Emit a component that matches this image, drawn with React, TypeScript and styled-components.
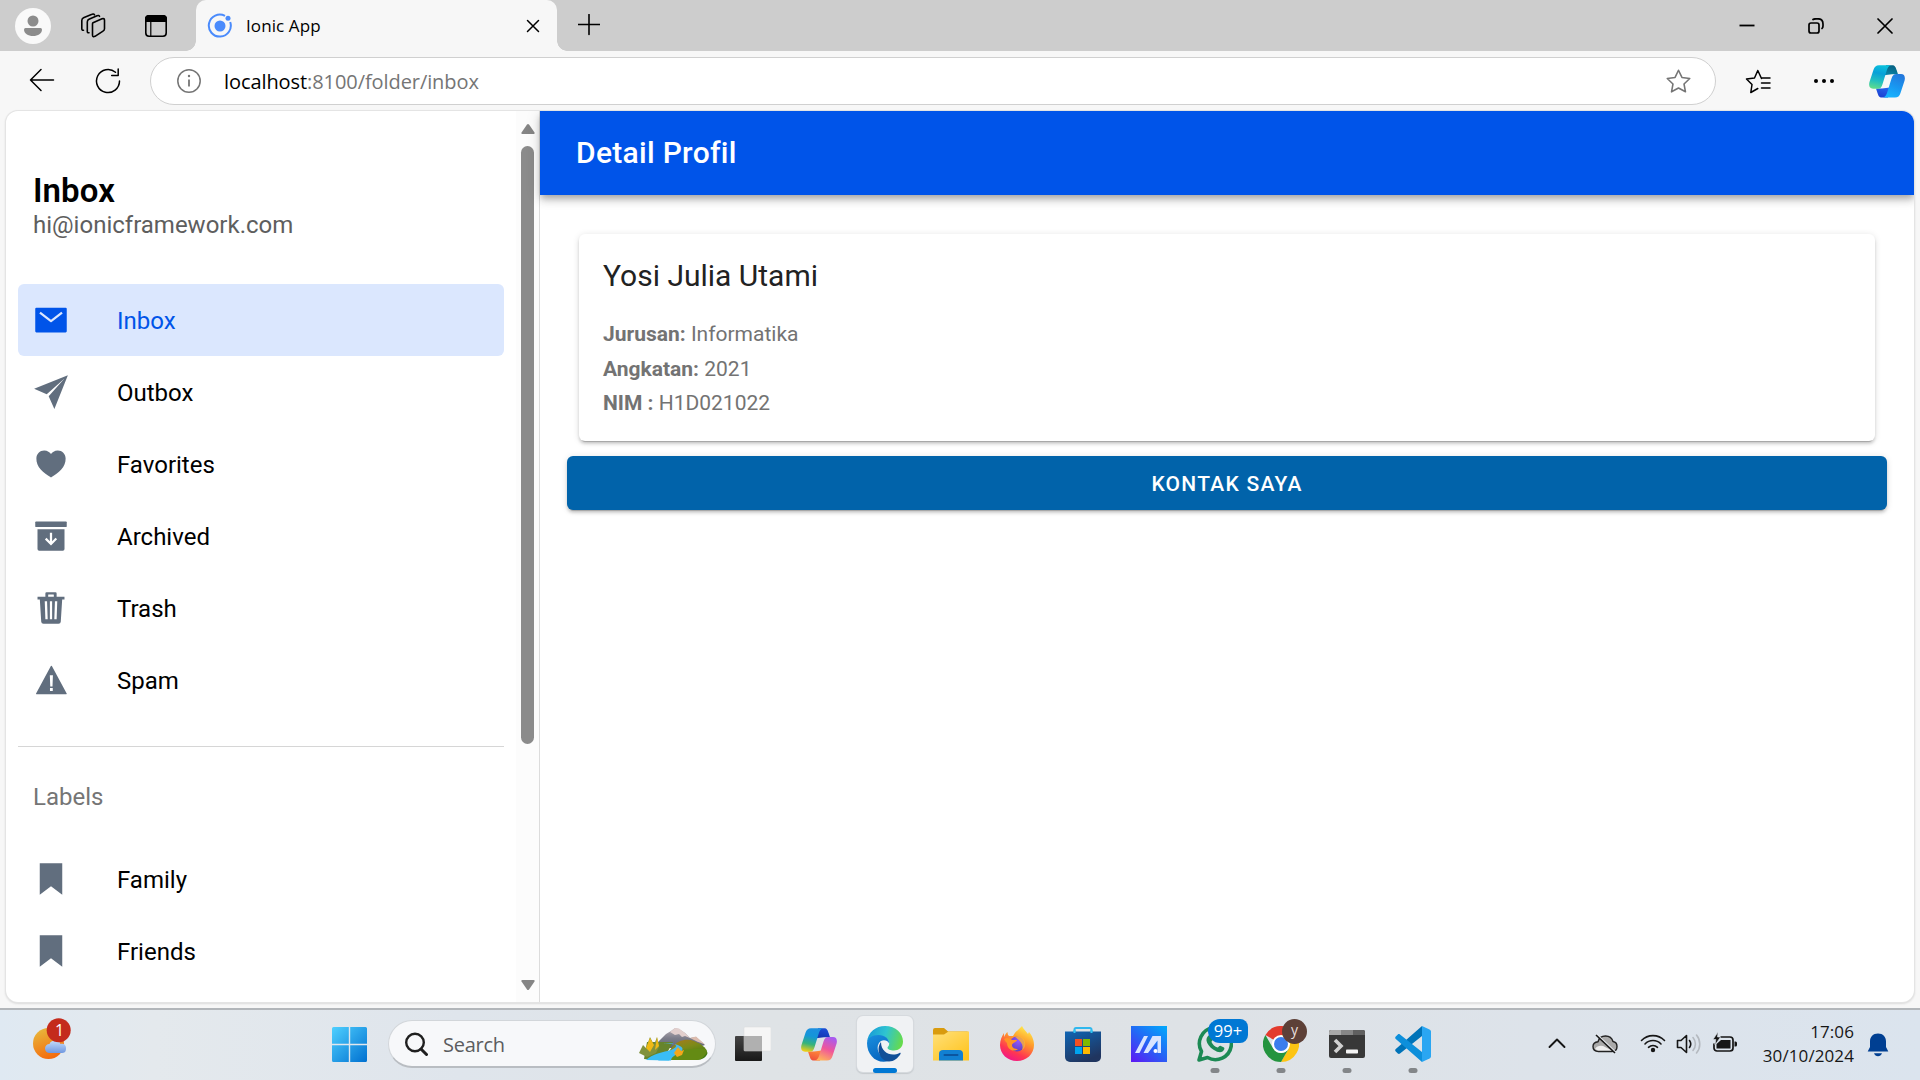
import React from "react";
import styled, { createGlobalStyle } from "styled-components";
import {
  IoMailSharp,
  IoPaperPlaneSharp,
  IoHeartSharp,
  IoArchiveSharp,
  IoTrashSharp,
  IoWarningSharp,
  IoBookmarkSharp,
} from "react-icons/io5";

const GlobalStyle = createGlobalStyle`
  * { box-sizing: border-box; }
  body { margin: 0; background: #f7f7f7; }
  h1, h2, p { margin: 0; font-weight: 400; }
  svg { display: block; flex: none; }
`;

const uiFont = `"Open Sans", "Noto Sans", sans-serif`;
const appFont = `Roboto, "Liberation Sans", sans-serif`;

const Screen = styled.div`
  width: 1920px;
  height: 1080px;
  display: flex;
  flex-direction: column;
  overflow: hidden;
  background: #f7f7f7;
  font-family: ${uiFont};
  color: #000;
`;

/* ---------- browser chrome ---------- */

const TabStrip = styled.div`
  display: flex;
  height: 51px;
  flex: none;
  background: #cdcdcd;
`;

const Slot = styled.div<{ $w: number; $up?: number }>`
  width: ${(p) => p.$w}px;
  flex: none;
  display: flex;
  align-items: center;
  justify-content: center;
  padding-bottom: ${(p) => p.$up ?? 0}px;
`;

const Tab = styled.div`
  position: relative;
  display: flex;
  align-items: center;
  width: 361px;
  background: #f7f7f7;
  border-radius: 10px 10px 0 0;
  &::before,
  &::after {
    content: "";
    position: absolute;
    bottom: 0;
    width: 10px;
    height: 10px;
  }
  &::before {
    left: -10px;
    background: radial-gradient(circle at 0 0, transparent 9.5px, #f7f7f7 10px);
  }
  &::after {
    right: -10px;
    background: radial-gradient(circle at 100% 0, transparent 9.5px, #f7f7f7 10px);
  }
`;

const TabTitle = styled.span`
  flex: 1;
  padding-left: 3px;
  font-size: 17px;
  line-height: 24px;
  letter-spacing: 0.1px;
`;

const Spacer = styled.div`
  flex: 1;
`;

const Toolbar = styled.div`
  display: flex;
  align-items: center;
  height: 60px;
  flex: none;
`;

const AddressBar = styled.div`
  display: flex;
  align-items: center;
  width: 1566px;
  height: 48px;
  flex: none;
  border: 1px solid #d0d0d0;
  border-radius: 24px;
  background: #fff;
`;

const Url = styled.span`
  flex: 1;
  padding: 2px 0 0 10px;
  font-size: 20px;
  line-height: 28px;
  letter-spacing: -0.08px;
  color: #757575;
  b {
    font-weight: 400;
    color: #000;
  }
`;

/* ---------- page ---------- */

const Page = styled.div`
  display: flex;
  height: 891px;
  flex: none;
  margin: 0 6px;
  overflow: hidden;
  background: #fff;
  border-radius: 12px;
  box-shadow: 0 0 0 1px #e4e4e4, 0 1px 2px 1px #dcdcdc;
  font-family: ${appFont};
`;

const Sidebar = styled.aside`
  display: flex;
  width: 534px;
  flex: none;
  border-right: 1px solid #dcdcdc;
`;

const MenuBody = styled.div`
  flex: 1;
  padding: 60px 12px 0;
`;

const MenuHeading = styled.h1`
  padding-left: 15px;
  font-size: 33px;
  line-height: 39px;
  font-weight: 600;
  letter-spacing: 0.1px;
`;

const MenuNote = styled.p`
  padding-left: 15px;
  margin-bottom: 44px;
  font-size: 24px;
  line-height: 30px;
  color: #5e5e5e;
`;

const MenuItem = styled.div<{ $active?: boolean }>`
  display: flex;
  align-items: center;
  height: 72px;
  padding: 0 15px;
  border-radius: 6px;
  font-size: 24px;
  line-height: 30px;
  color: ${(p) => (p.$active ? "#0054e9" : "#000")};
  background: ${(p) => (p.$active ? "#dbe7fe" : "transparent")};
  svg {
    width: 36px;
    height: 36px;
    margin-right: 48px;
    color: ${(p) => (p.$active ? "#0054e9" : "#616e7e")};
  }
  span {
    padding-top: 2px;
  }
`;

const Divider = styled.div`
  height: 1px;
  margin: 30px 0 35px;
  background: #d6d6d6;
`;

const ListHeader = styled.p`
  padding-left: 15px;
  margin-bottom: 31px;
  font-size: 24px;
  line-height: 30px;
  color: #757575;
`;

const ScrollTrack = styled.div`
  display: flex;
  flex-direction: column;
  align-items: center;
  width: 23px;
  padding: 12px 0 11px;
  background: #fcfcfc;
`;

const ScrollThumb = styled.div`
  width: 13px;
  height: 598px;
  margin: 11px 0 auto;
  border-radius: 7px;
  background: #8b8b8b;
`;

const Main = styled.main`
  flex: 1;
  display: flex;
  flex-direction: column;
`;

const MainHeader = styled.header`
  display: flex;
  align-items: center;
  height: 84px;
  flex: none;
  padding: 0 36px;
  background: #0054e9;
  color: #fff;
  font-size: 30px;
  line-height: 36px;
  font-weight: 480;
  letter-spacing: 0.3px;
  box-shadow: 0 3px 6px -1.5px rgba(0, 0, 0, 0.2), 0 6px 7.5px 0 rgba(0, 0, 0, 0.14),
    0 1.5px 15px 0 rgba(0, 0, 0, 0.12);
`;

const Content = styled.div`
  display: flex;
  flex-direction: column;
  padding: 39px 27px 0;
`;

const Card = styled.section`
  height: 207px;
  margin: 0 12px 15px;
  padding: 24px;
  border-radius: 6px;
  background: #fff;
  box-shadow: 0 4px 1px -3px rgba(0, 0, 0, 0.2), 0 3px 3px 0 rgba(0, 0, 0, 0.14),
    0 1px 7px 0 rgba(0, 0, 0, 0.12);
`;

const CardTitle = styled.h2`
  margin-bottom: 23px;
  font-size: 30px;
  line-height: 36px;
  color: #222;
`;

const CardLine = styled.p`
  font-size: 21px;
  line-height: 34.5px;
  color: #737373;
  b {
    font-weight: 700;
  }
`;

const ContactButton = styled.button`
  height: 54px;
  padding: 2px 0 0;
  border: 0;
  border-radius: 6px;
  background: #0163aa;
  color: #fff;
  font: 480 21px/30px ${appFont};
  letter-spacing: 1.26px;
  box-shadow: 0 4px 1px -3px rgba(0, 0, 0, 0.2), 0 3px 3px 0 rgba(0, 0, 0, 0.14),
    0 1px 7px 0 rgba(0, 0, 0, 0.12);
`;

/* ---------- taskbar ---------- */

const Taskbar = styled.footer`
  display: flex;
  align-items: stretch;
  height: 72px;
  margin-top: auto;
  flex: none;
  border-top: 2px solid #b2b6ba;
  background: linear-gradient(90deg, #dfe9f2 0, #e4e9ed 8%, #dfe5ec 24%, #dfe3e6 40%, #dee2e6 62%, #dde3ea 80%, #dbe4ee 100%);
`;

const WeatherArea = styled.div`
  width: 316px;
  padding: 8px 0 0 33px;
`;

const TaskCell = styled.div<{ $active?: boolean }>`
  position: relative;
  display: flex;
  align-items: center;
  justify-content: center;
  width: ${(p) => (p.$active ? 56 : 66)}px;
  height: 56px;
  margin: 6px ${(p) => (p.$active ? 5 : 0)}px 0;
  border-radius: 6px;
  background: ${(p) => (p.$active ? "#f0f2f4" : "transparent")};
  box-shadow: ${(p) => (p.$active ? "0 0 0 1px #d6dade, 0 1px 1px 1px #c6cace" : "none")};
`;

const Indicator = styled.i<{ $active?: boolean }>`
  position: absolute;
  bottom: -1px;
  left: 50%;
  width: ${(p) => (p.$active ? 24 : 9)}px;
  height: 5px;
  transform: translateX(-50%);
  border-radius: 3px;
  background: ${(p) => (p.$active ? "#0078d4" : "#838689")};
`;

const SearchBox = styled.div`
  display: flex;
  align-items: center;
  width: 328px;
  height: 48px;
  margin: 10px 4px 0 6px;
  padding: 0 7px 0 15px;
  border: 1px solid #d2d6da;
  border-bottom: 2px solid #b9bdc2;
  border-radius: 24px;
  background: #f7f8fa;
  font-size: 20px;
  line-height: 28px;
  letter-spacing: -0.25px;
  color: #5b5c5e;
`;

const SearchLabel = styled.span`
  flex: 1;
  padding: 2px 0 0 15px;
`;

const CountBadge = styled.span`
  position: absolute;
  top: 3px;
  left: 26px;
  width: 40px;
  height: 24px;
  border-radius: 12px 8px 8px 12px;
  background: #0078d4;
  color: #fff;
  text-align: center;
  font-size: 16.5px;
  line-height: 24px;
`;

const ProfileBadge = styled.span`
  position: absolute;
  top: 3px;
  left: 34px;
  width: 25px;
  height: 25px;
  border-radius: 50%;
  background: #5d4037;
  color: #e8dfdc;
  text-align: center;
  font-size: 14px;
  line-height: 21px;
`;

const Clock = styled.div`
  width: 106px;
  padding: 10px 0 0;
  text-align: right;
  font-size: 17px;
  line-height: 24px;
  letter-spacing: 0.1px;
  color: #161616;
`;

const TrayCell = styled.div<{ $w: number; $down?: number }>`
  display: flex;
  align-items: center;
  justify-content: center;
  width: ${(p) => p.$w}px;
  height: ${(p) => 66 + 2 * (p.$down ?? 0)}px;
`;

/* ---------- drawings ---------- */

const line = { fill: "none", stroke: "#000", strokeLinecap: "round", strokeLinejoin: "round" } as const;

const Copilot = ({ id, colors }: { id: string; colors: string[][] }) => (
  <svg width="36" height="33" viewBox="0 0 36 32.5">
    <defs>
      {colors.map((c, i) => (
        <linearGradient key={i} id={id + i} x1={i === 0 ? "0.5" : "0.7"} y1="0" x2="0.3" y2="1">
          {c.map((s, k) => (
            <stop key={k} offset={k / (c.length - 1)} stopColor={s} />
          ))}
        </linearGradient>
      ))}
    </defs>
    <path d="M17 0h6c3 0 3.7 2 4.700 5l1.300 4h-6l-8 1z" fill={`url(#${id}2)`} />
    <path d="M19 32.300h-6c-3 0-3.700-2-4.700-5L7 23.300h6l8-1z" fill={`url(#${id}3)`} />
    <path d="M10 0h12c-2.500.5-3.500 3-4.500 6L13.500 19c-1 3-2 4.500-5 4.500H4C.7 23.500-.5 21 .4 17L4.500 4.500C5.500 1.500 7 0 10 0z" fill={`url(#${id}0)`} />
    <path d="M26 32.300H14c2.500-.5 3.500-3 4.500-6l4-13c1-3 2-4.500 5-4.500H32c3.300 0 4.500 2.500 3.600 6.500L31.500 27.800c-1 3-2.500 4.500-5.500 4.500z" fill={`url(#${id}1)`} />
  </svg>
);

const starPath = "M12 1.200l3.300 6.900 7.500 1-5.500 5.300 1.400 7.500L12 18.300l-6.700 3.600 1.400-7.500L1.200 9.100l7.500-1z";

const WeatherIcon = () => (
  <svg width="42" height="44" viewBox="0 0 42 44">
    <defs>
      <linearGradient id="sun" x1="0.2" y1="0" x2="0.6" y2="1">
        <stop offset="0" stopColor="#e8b93c" />
        <stop offset="1" stopColor="#f4690c" />
      </linearGradient>
      <linearGradient id="cloud" x1="0" y1="0" x2="0" y2="1">
        <stop offset="0" stopColor="#c3dcfb" />
        <stop offset="1" stopColor="#7098e0" />
      </linearGradient>
    </defs>
    <circle cx="15.500" cy="25.500" r="15.500" fill="url(#sun)" />
    <path d="M16.500 35a4.500 4.500 0 0 1 0-9c1-4 9-5 11 0 3-1 6 1 5.500 5 0 3-2 4-4 4z" fill="url(#cloud)" />
    <circle cx="25.700" cy="12.300" r="12" fill="#c42b1c" />
    <text x="26.500" y="18" textAnchor="middle" fontFamily="Open Sans, sans-serif" fontSize="16" fill="#fff">1</text>
  </svg>
);

const WindowsIcon = () => (
  <svg width="35" height="35" viewBox="0 0 35 35">
    <defs>
      <linearGradient id="win" x1="0" y1="0" x2="1" y2="1" gradientUnits="objectBoundingBox">
        <stop offset="0" stopColor="#4fd0ff" />
        <stop offset="1" stopColor="#0070d0" />
      </linearGradient>
    </defs>
    <path d="M1.500 0H16.800V16.800H0V1.500A1.500 1.500 0 0 1 1.500 0zM18.200 0H33.500A1.500 1.500 0 0 1 35 1.500V16.800H18.200zM0 18.200H16.800V35H1.500A1.500 1.500 0 0 1 0 33.500zM18.200 18.200H35V33.500A1.500 1.500 0 0 1 33.500 35H18.200z" fill="url(#win)" />
  </svg>
);

const Landscape = () => (
  <svg width="69" height="34" viewBox="0 0 69 34">
    <defs>
      <linearGradient id="hill" x1="0" y1="0" x2="0.6" y2="1">
        <stop offset="0" stopColor="#b5761c" />
        <stop offset="0.5" stopColor="#7c8a18" />
        <stop offset="1" stopColor="#3f7a12" />
      </linearGradient>
      <linearGradient id="mount" x1="0" y1="0" x2="0" y2="1">
        <stop offset="0" stopColor="#b9b0b6" />
        <stop offset="0.5" stopColor="#7d7e8b" />
        <stop offset="1" stopColor="#5d6472" />
      </linearGradient>
    </defs>
    <path d="M19 15L27 7l5-3 4-3 4 1 6 4 5 5 6-1 9 8-10 3H24z" fill="url(#mount)" />
    <path d="M31 5l5-4 4 .5 6 4.500 5 5-5-2-3 1-3-3-4 1z" fill="#e2cfcd" />
    <path d="M51 11l6-1.500 9 8-8-3z" fill="#dcbcae" />
    <path d="M8 15h26l-6 11-14 7-9-1z" fill="#66842c" />
    <path d="M33 20c6-7 15-9 22-6s12 6 13.500 12c-1 4-5 7-11 7H24z" fill="url(#hill)" />
    <path d="M26 33c6-9 20-12 41-11 1 2 1 4-1 6-2 3-5 5-9 5z" fill="#648b14" />
    <path d="M24 17c8-2 13 0 13 2 0 3-12 6-16 13l-2 1.500h13c0-5 9-7 11-10 3-4-6-8-19-6.500z" fill="#46b9f0" />
    <path d="M7 33c6-6 17-8 26-10l2 5-5 5.500z" fill="#39bdf5" />
    <path d="M0 26l4-8 3 3 4-11 4 8 3-8 2 10-3 6-9 4z" fill="#81923c" />
    <path d="M11 11l4 7-4 7-4-4zM18 10l2 9-4 4z" fill="#efb915" />
    <path d="M35 26l4-6 3 4 3-1-2 5-5 2z" fill="#f2a71b" />
  </svg>
);

const TaskViewIcon = () => (
  <svg width="36" height="36" viewBox="0 0 36 36">
    <defs>
      <linearGradient id="tvd" x1="0" y1="0" x2="0" y2="1">
        <stop offset="0" stopColor="#444" />
        <stop offset="1" stopColor="#181818" />
      </linearGradient>
    </defs>
    <rect x="0" y="10" width="27" height="25" rx="1" fill="url(#tvd)" />
    <rect x="9" y="1" width="27" height="24" rx="1" fill="#f6f6f6" stroke="#d8d8d8" strokeWidth=".5" />
    <rect x="9" y="10" width="18" height="15" fill="#b0b0b0" />
  </svg>
);

const EdgeIcon = () => (
  <svg width="36" height="36" viewBox="0 0 36 36">
    <defs>
      <linearGradient id="edgeTop" x1="0" y1="0.3" x2="1" y2="0.5">
        <stop offset="0" stopColor="#1799d8" />
        <stop offset="0.5" stopColor="#2fc4d0" />
        <stop offset="1" stopColor="#66db4c" />
      </linearGradient>
      <linearGradient id="edgeLeft" x1="0" y1="0" x2="0.4" y2="1">
        <stop offset="0" stopColor="#1a8fdf" />
        <stop offset="1" stopColor="#0767c0" />
      </linearGradient>
    </defs>
    <path d="M0 16C1 6 9 0 18 0c11 0 18 7.500 18 15.500 0 6-4.500 9-9 9-4 0-6.500-1.500-6.500-2.800 0-1 1.700-1.500 1.700-4.200 0-4-4-7.500-9.500-7.500C6 10 1.500 13 0 16z" fill="url(#edgeTop)" />
    <path d="M0 17c.5-5 5-8 11.500-8 6.500 0 10.700 4 10.700 8.500-2-4-8-4.500-10.500 0-3.500 6.500 2 15 10 17.500C10 38.500 0 29.500 0 17z" fill="url(#edgeLeft)" />
    <path d="M14 16c-6 8 0 19.500 8 19.500 5 0 9-3.500 11.500-7.500.5-1-.3-1.500-1-1-8 4-18.500 0-18.500-11z" fill="#114f98" />
  </svg>
);

const FolderIcon = () => (
  <svg width="36" height="33" viewBox="0 0 36 33">
    <defs>
      <linearGradient id="fold" x1="0" y1="0" x2="0.8" y2="1">
        <stop offset="0" stopColor="#ffe07a" />
        <stop offset="1" stopColor="#ffc41f" />
      </linearGradient>
    </defs>
    <path d="M0 2a2 2 0 0 1 2-2h9l4 3.500h19a2 2 0 0 1 2 2V12H0z" fill="#d99b0e" />
    <path d="M0 6.500h11l4.500-3H36V32.500H0z" fill="url(#fold)" />
    <path d="M6 32.500V26a4 4 0 0 1 4-4h16a4 4 0 0 1 4 4v6.500z" fill="#1180d2" />
    <rect x="10.500" y="26" width="15" height="2" rx="1" fill="#0b559f" />
  </svg>
);

const FirefoxIcon = () => (
  <svg width="34" height="36" viewBox="0 0 34 36">
    <defs>
      <linearGradient id="ff" x1="0.8" y1="0" x2="0.3" y2="1">
        <stop offset="0" stopColor="#fff44f" />
        <stop offset="0.4" stopColor="#ff9a2a" />
        <stop offset="0.75" stopColor="#ff3750" />
        <stop offset="1" stopColor="#f0158a" />
      </linearGradient>
      <radialGradient id="ffg" cx="0.6" cy="0.3" r="0.8">
        <stop offset="0" stopColor="#9059ff" />
        <stop offset="1" stopColor="#5b3bb8" />
      </radialGradient>
    </defs>
    <path d="M22 0c1 3 4 5 6 8l1-2c4 5 5 9 5 13 0 9-7.500 16-17 16S0 28 0 19c0-5 2-9 4-12v4c1-2 2-4 3.500-5 0 2 .5 3 1.500 4h4c2-4 4-5 6-7l3-3z" fill="url(#ff)" />
    <circle cx="17" cy="18" r="7.500" fill="url(#ffg)" />
    <path d="M4 13c3-2 6-1 8 1h5c0 2-5 3-5 5 0 3 3 4 6 4-5 4-11 0-11-6-1-1-2-2-3-4z" fill="#ff9526" />
    <path d="M15 11c4-2 9 0 10 5 1 4-1 7-3 8 2-5-1-9-7-13z" fill="#ffb52f" opacity=".8" />
  </svg>
);

const StoreIcon = () => (
  <svg width="36" height="36" viewBox="0 0 36 36">
    <defs>
      <linearGradient id="store" x1="0" y1="0" x2="0.5" y2="1">
        <stop offset="0" stopColor="#0f65b4" />
        <stop offset="1" stopColor="#20355f" />
      </linearGradient>
    </defs>
    <path d="M9.500 9V3.500a1.500 1.500 0 0 1 1.500-1.500h14a1.500 1.500 0 0 1 1.500 1.500V9" fill="none" stroke="#30b8ee" strokeWidth="2" />
    <path d="M0 5.500h36V31a5 5 0 0 1-5 5H5a5 5 0 0 1-5-5z" fill="url(#store)" />
    <path d="M9.500 7V4M26.500 7V4" stroke="#30c5f4" strokeWidth="2" />
    <rect x="10" y="13" width="7" height="7" fill="#f25022" />
    <rect x="18" y="13" width="7" height="7" fill="#7fba00" />
    <rect x="10" y="21" width="7" height="7" fill="#00a4ef" />
    <rect x="18" y="21" width="7" height="7" fill="#ffb900" />
  </svg>
);

const ArmouryIcon = () => (
  <svg width="36" height="36" viewBox="0 0 36 36">
    <defs>
      <linearGradient id="asus" x1="0.1" y1="1" x2="0.9" y2="0">
        <stop offset="0" stopColor="#5a1cf4" />
        <stop offset="0.5" stopColor="#2565f5" />
        <stop offset="1" stopColor="#03a5fb" />
      </linearGradient>
    </defs>
    <rect width="36" height="36" fill="url(#asus)" />
    <path d="M4 27l9-17h4L8.500 27zM12.500 27l9-17H30v17h-3.500V14.500L17 27z" fill="#d8e4ff" />
    <circle cx="24.500" cy="25" r="2" fill="#fff" />
  </svg>
);

const WhatsAppIcon = () => (
  <svg width="36" height="36" viewBox="0 0 36 36">
    <path d="M2 34l2.500-8.500A16 16 0 1 1 10.500 31.500z" fill="none" stroke="#1c8a54" strokeWidth="3.600" strokeLinejoin="round" />
    <path d="M11 10c1-1.500 3-1.500 3.500 0l1.300 3c.4 1-1.300 2-1.300 3 1 2.500 3.500 4.800 6 5.500 1 0 2-2 3-1.700l3.500 1.700c1 .7 0 3-1.500 4-2 1.300-5 .8-9-1.800-4-2.700-6.500-6-7-9-.2-2 .5-3.500 1.500-4.700z" fill="#1c8a54" />
  </svg>
);

const ChromeIcon = () => (
  <svg width="36" height="36" viewBox="0 0 36 36">
    <path d="M18 18L2.400 9A18 18 0 0 1 33.600 9z" fill="#e33b2e" />
    <path d="M18 9h15.600A18 18 0 0 1 18 36l7.800-13.500z" fill="#fdc413" />
    <path d="M2.400 9l7.800 13.500a9 9 0 0 0 15.600 0L18 36A18 18 0 0 1 2.400 9z" fill="#24943f" />
    <circle cx="18" cy="18" r="9" fill="#fff" />
    <circle cx="18" cy="18" r="7" fill="#3b7ded" />
  </svg>
);

const TerminalIcon = () => (
  <svg width="36" height="28" viewBox="0 0 36 28">
    <rect width="36" height="28" rx="2" fill="#383838" />
    <path d="M0 5V2a2 2 0 0 1 2-2h10v5z" fill="#a9a9a9" />
    <path d="M12 0h12v5H12z" fill="#868686" />
    <path d="M24 0h10a2 2 0 0 1 2 2v3H24z" fill="#606060" />
    <path d="M6 10l6 6-6 6" fill="none" stroke="#d0d0d0" strokeWidth="3.600" />
    <rect x="17" y="19.500" width="12" height="4" rx=".8" fill="#f4f4f4" />
  </svg>
);

const CodeIcon = () => (
  <svg width="36" height="36" viewBox="0 0 36 36">
    <path d="M27 0v10L5 27.500c-.8.600-1.500.5-2.200 0L.8 25.500c-.8-.8-.8-1.700 0-2.500z" fill="#0073b8" />
    <path d="M27 36V26L5 8.500c-.8-.6-1.500-.5-2.200 0L.8 10.500c-.8.800-.8 1.700 0 2.500z" fill="#0d8fdb" />
    <path d="M27 0l7.500 3.500c1 .5 1.500 1.200 1.500 2.200v24.600c0 1-.5 1.700-1.500 2.200L27 36z" fill="#2aa6f2" />
  </svg>
);

const CloudOffIcon = () => (
  <svg width="26" height="22" viewBox="0 0 26 22">
    <path d="M6.500 18.500C3 18.500 1 16.500 1 13.500S3 9 6 8.700C7 5 10 3 13.500 3c4 0 6.500 2 7.500 5.500 3 .5 4 2.500 4 5 0 3-2 5-5 5z" fill="#aaa" stroke="#222" strokeWidth="1.400" />
    <path d="M3 16c2-3.500 7-4 10-2l7 3.500H6z" fill="#eee" />
    <path d="M5 1.500l19 18" stroke="#e5e9ee" strokeWidth="1.600" />
    <path d="M4 2l19 18" stroke="#161616" strokeWidth="1.600" />
  </svg>
);

const WifiIcon = () => (
  <svg width="26" height="20" viewBox="0 0 26 20">
    <g fill="none" stroke="#161616" strokeWidth="1.600" strokeLinecap="round">
      <path d="M1.500 7.500a16 16 0 0 1 23 0M5 11a11 11 0 0 1 16 0M8.500 14.300a6.500 6.500 0 0 1 9 0" />
    </g>
    <circle cx="13" cy="17" r="2.200" fill="#161616" />
  </svg>
);

const VolumeIcon = () => (
  <svg width="26" height="22" viewBox="0 0 26 22">
    <path d="M1.500 7.500H5L10.500 2.500v17L5 14.500H1.500z" {...line} stroke="#161616" strokeWidth="1.600" />
    <path d="M13.500 7.500a6 6 0 0 1 0 7" {...line} stroke="#161616" strokeWidth="1.600" />
    <path d="M17 4.500a10 10 0 0 1 0 13M20.500 2a14 14 0 0 1 0 18" {...line} stroke="#b4b9bf" strokeWidth="1.600" />
  </svg>
);

const BatteryIcon = () => (
  <svg width="26" height="22" viewBox="0 0 26 22">
    <path d="M9 5h9a3 3 0 0 1 3 3v8a3 3 0 0 1-3 3H5a3 3 0 0 1-3-3v-4" {...line} stroke="#161616" strokeWidth="1.700" />
    <path d="M9 8h9.500v8.500h-14V12z" fill="#161616" />
    <path d="M22.500 9.500h1a1.500 1.500 0 0 1 1.500 1.500v2a1.500 1.500 0 0 1-1.500 1.500h-1z" fill="#161616" />
    <path d="M6 0L1 7.500h2.800L3 13l5.500-8H5.500z" fill="#161616" stroke="#dfe5ec" strokeWidth=".6" />
  </svg>
);

const folderItems = [
  { label: "Inbox", Icon: IoMailSharp, active: true },
  { label: "Outbox", Icon: IoPaperPlaneSharp },
  { label: "Favorites", Icon: IoHeartSharp },
  { label: "Archived", Icon: IoArchiveSharp },
  { label: "Trash", Icon: IoTrashSharp },
  { label: "Spam", Icon: IoWarningSharp },
];

const labelItems = ["Family", "Friends"];

const profile = [
  { key: "Jurusan:", value: "Informatika" },
  { key: "Angkatan:", value: "2021" },
  { key: "NIM :", value: "H1D021022" },
];

export default function App() {
  return (
    <Screen>
      <GlobalStyle />
      <TabStrip>
        <Slot $w={66}>
          <svg width="36" height="36" viewBox="0 0 36 36">
            <circle cx="18" cy="18" r="18" fill="#f9f9f9" />
            <circle cx="18" cy="13" r="5.500" fill="#8c8c8c" />
            <path d="M9 21.500A1.500 1.500 0 0 1 10.500 20h15a1.500 1.500 0 0 1 1.500 1.500c0 4-4 6.500-9 6.500s-9-2.500-9-6.500z" fill="#8c8c8c" />
          </svg>
        </Slot>
        <Slot $w={54}>
          <svg width="26" height="26" viewBox="0 0 26 26">
            <g {...line} strokeWidth="1.600">
              <path d="M13 9.700L22 5.800q2.500-.8 2.500 1.500v8.500q0 1.500-1.500 2.300l-8 5.200q-2.500 1.200-2.500-1.200V11q0-1 .5-1.300z" />
              <path d="M19.500 3.300q-.5-1.300-2.500-.5L9 6.300Q7.300 7 7.300 9v9.500q0 1.500 1.700 1.300" />
              <path d="M14.500 1.800q-.7-1.300-2.500-.5L3.500 4.700Q1.800 5.500 1.800 7.500v8q0 2 1.700 1.800" />
            </g>
          </svg>
        </Slot>
        <Slot $w={72}>
          <svg width="22" height="22" viewBox="0 0 22 22">
            <rect x=".8" y=".8" width="20.400" height="20.400" rx="3.200" {...line} strokeWidth="1.600" />
            <path d="M.5 6.500V4a3.500 3.500 0 0 1 3.500-3.500h14A3.500 3.500 0 0 1 21.500 4v2.500zM5.800 6v15" fill="#000" stroke="#000" strokeWidth="1.200" />
          </svg>
        </Slot>
        <Slot $w={4} />
        <Tab>
          <Slot $w={47}>
            <svg width="26" height="26" viewBox="0 0 26 26">
              <path d="M18 2.900A11 11 0 1 0 23.200 9" fill="none" stroke="#4a8bfc" strokeWidth="2" />
              <circle cx="13" cy="13" r="5.500" fill="#4a8bfc" />
              <circle cx="21" cy="5.300" r="2.500" fill="#4a8bfc" />
            </svg>
          </Slot>
          <TabTitle>Ionic App</TabTitle>
          <Slot $w={48}>
            <svg width="14" height="14" viewBox="0 0 14 14">
              <path d="M1.500 1.500l11 11M12.500 1.500l-11 11" {...line} strokeWidth="1.500" />
            </svg>
          </Slot>
        </Tab>
        <Slot $w={63} $up={1}>
          <svg width="22" height="22" viewBox="0 0 22 22">
            <path d="M11 .5v20M.5 10.500h21" {...line} strokeWidth="1.600" />
          </svg>
        </Slot>
        <Spacer />
        <Slot $w={69}>
          <svg width="16" height="16" viewBox="0 0 16 16">
            <path d="M.5 7.500h15" stroke="#000" strokeWidth="1.800" />
          </svg>
        </Slot>
        <Slot $w={69}>
          <svg width="16" height="16" viewBox="0 0 16 16">
            <rect x="1" y="5" width="10" height="10" rx="2" {...line} strokeWidth="1.700" />
            <path d="M5 1.500Q6 .8 8 .8h2Q15 .8 15 6v2q0 1.500-1 2.500" {...line} strokeWidth="1.700" />
          </svg>
        </Slot>
        <Slot $w={69}>
          <svg width="16" height="16" viewBox="0 0 16 16">
            <path d="M1 1l14 14M15 1L1 15" {...line} strokeWidth="1.700" />
          </svg>
        </Slot>
        <Slot $w={1} />
      </TabStrip>

      <Toolbar>
        <Slot $w={84} $up={2}>
          <svg width="26" height="24" viewBox="0 0 26 24">
            <path d="M12 1.500L1.500 12L12 22.500M1.500 12h23" {...line} strokeWidth="1.500" />
          </svg>
        </Slot>
        <Slot $w={48}>
          <svg width="26" height="26" viewBox="0 0 26 26">
            <path d="M24.500 13A11.500 11.500 0 1 1 20.500 4.300M23.200 1v6.500h-6.500" {...line} strokeWidth="1.500" />
          </svg>
        </Slot>
        <Slot $w={18} />
        <AddressBar>
          <Slot $w={26} />
          <svg width="24" height="24" viewBox="0 0 24 24">
            <circle cx="12" cy="12" r="11.200" fill="none" stroke="#757575" strokeWidth="1.500" />
            <path d="M12 10.500v7" stroke="#757575" strokeWidth="1.800" />
            <circle cx="12" cy="7" r="1.200" fill="#757575" />
          </svg>
          <Slot $w={13} />
          <Url>
            <b>localhost</b>:8100/folder/inbox
          </Url>
          <Slot $w={74}>
            <svg width="25" height="25" viewBox="0 0 24 24">
              <path d={starPath} {...line} stroke="#757575" strokeWidth="1.500" />
            </svg>
          </Slot>
        </AddressBar>
        <Slot $w={84}>
          <svg width="26" height="25" viewBox="0 0 26 25">
            <path d="M16.500 9.500L12.800 1.500 9.500 9 1.500 10l5.500 5.500L5.800 23.500l7-4M16.500 9h8.500M16.500 14h8.500M16.500 19h8.500" {...line} strokeWidth="1.500" />
          </svg>
        </Slot>
        <Slot $w={48}>
          <svg width="22" height="6" viewBox="0 0 22 6">
            <circle cx="3" cy="3" r="2" />
            <circle cx="11" cy="3" r="2" />
            <circle cx="19" cy="3" r="2" />
          </svg>
        </Slot>
        <Slot $w={6} />
        <Slot $w={66}>
          <Copilot
            id="cb"
            colors={[
              ["#0ac0dc", "#08a0d8", "#22bfc0", "#5fdc8c"],
              ["#2478dc", "#1996f0", "#17b4ff"],
              ["#075f80", "#0a86a8"],
              ["#2563eb", "#1c3fd0"],
            ]}
          />
        </Slot>
      </Toolbar>

      <Page>
        <Sidebar>
          <MenuBody>
            <MenuHeading>Inbox</MenuHeading>
            <MenuNote>hi@ionicframework.com</MenuNote>
            {folderItems.map(({ label, Icon, active }) => (
              <MenuItem key={label} $active={active}>
                <Icon />
                <span>{label}</span>
              </MenuItem>
            ))}
            <Divider />
            <ListHeader>Labels</ListHeader>
            {labelItems.map((label) => (
              <MenuItem key={label}>
                <IoBookmarkSharp />
                <span>{label}</span>
              </MenuItem>
            ))}
          </MenuBody>
          <ScrollTrack>
            <svg width="14" height="12" viewBox="0 0 14 12">
              <path d="M6 1.500q1-1.200 2 0l5.500 8q.7 1.500-1 1.500h-11q-1.700 0-1-1.500z" fill="#858585" />
            </svg>
            <ScrollThumb />
            <svg width="14" height="12" viewBox="0 0 14 12">
              <path d="M6 10.500q1 1.200 2 0l5.500-8Q14.200 1 12.500 1h-11Q-.2 1 .5 2.500z" fill="#858585" />
            </svg>
          </ScrollTrack>
        </Sidebar>
        <Main>
          <MainHeader>Detail Profil</MainHeader>
          <Content>
            <Card>
              <CardTitle>Yosi Julia Utami</CardTitle>
              {profile.map((row) => (
                <CardLine key={row.key}>
                  <b>{row.key}</b> {row.value}
                </CardLine>
              ))}
            </Card>
            <ContactButton>KONTAK SAYA</ContactButton>
          </Content>
        </Main>
      </Page>

      <Taskbar>
        <WeatherArea>
          <WeatherIcon />
        </WeatherArea>
        <TaskCell>
          <WindowsIcon />
        </TaskCell>
        <SearchBox>
          <svg width="24" height="24" viewBox="0 0 24 24">
            <circle cx="11" cy="10.500" r="8.800" fill="none" stroke="#1f1f1f" strokeWidth="2.400" />
            <path d="M17 17l5.500 5.500" stroke="#1f1f1f" strokeWidth="3" strokeLinecap="round" />
          </svg>
          <SearchLabel>Search</SearchLabel>
          <Landscape />
        </SearchBox>
        <TaskCell>
          <TaskViewIcon />
        </TaskCell>
        <TaskCell>
          <Copilot
            id="ct"
            colors={[
              ["#1d8fe0", "#1496d8", "#35b37c", "#f0cf16"],
              ["#a85bf0", "#f0569a", "#ffb45a"],
              ["#1c50d8", "#1534b0"],
              ["#ff8a3a", "#ee4e3c"],
            ]}
          />
        </TaskCell>
        <TaskCell $active>
          <EdgeIcon />
          <Indicator $active />
        </TaskCell>
        <TaskCell>
          <FolderIcon />
        </TaskCell>
        <TaskCell>
          <FirefoxIcon />
        </TaskCell>
        <TaskCell>
          <StoreIcon />
        </TaskCell>
        <TaskCell>
          <ArmouryIcon />
        </TaskCell>
        <TaskCell>
          <WhatsAppIcon />
          <CountBadge>99+</CountBadge>
          <Indicator />
        </TaskCell>
        <TaskCell>
          <ChromeIcon />
          <ProfileBadge>y</ProfileBadge>
          <Indicator />
        </TaskCell>
        <TaskCell>
          <TerminalIcon />
          <Indicator />
        </TaskCell>
        <TaskCell>
          <CodeIcon />
          <Indicator />
        </TaskCell>
        <Spacer />
        <TrayCell $w={46}>
          <svg width="18" height="12" viewBox="0 0 18 12">
            <path d="M1.500 10L9 2.500l7.500 7.500" {...line} stroke="#161616" strokeWidth="1.900" />
          </svg>
        </TrayCell>
        <TrayCell $w={50} $down={1}>
          <CloudOffIcon />
        </TrayCell>
        <TrayCell $w={46}>
          <WifiIcon />
        </TrayCell>
        <TrayCell $w={26} $down={1}>
          <VolumeIcon />
        </TrayCell>
        <TrayCell $w={46}>
          <BatteryIcon />
        </TrayCell>
        <Clock>
          17:06
          <br />
          30/10/2024
        </Clock>
        <TrayCell $w={48} $down={2}>
          <svg width="22" height="24" viewBox="0 0 22 24">
            <path d="M11 .5c5 0 8 3.500 8 8V14l2.300 4.500H.7L3 14V8.500c0-4.500 3-8 8-8zM7 20.200h8c-.7 2-2.200 3-4 3s-3.300-1-4-3z" fill="#003f92" />
          </svg>
        </TrayCell>
        <Slot $w={18} />
      </Taskbar>
    </Screen>
  );
}
